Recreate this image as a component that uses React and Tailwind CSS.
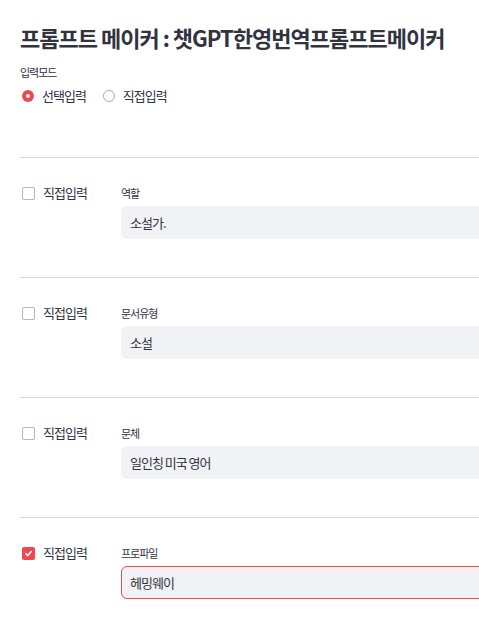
import { useState } from "react";

const FONT = { fontFamily: '"Noto Sans CJK KR", "Noto Sans", sans-serif' };

const fields = [
  { label: "역할", value: "소설가.", checked: false },
  { label: "문서유형", value: "소설", checked: false },
  { label: "문체", value: "일인칭 미국 영어", checked: false },
  { label: "프로파일", value: "헤밍웨이", checked: true },
];

function Radio({ on, label }) {
  return (
    <label className="flex items-center gap-[8px]">
      {on ? (
        <span className="flex h-[12px] w-[12px] items-center justify-center rounded-full bg-[#f0474f]">
          <span className="h-[4px] w-[4px] rounded-full bg-white" />
        </span>
      ) : (
        <span className="h-[12px] w-[12px] rounded-full border border-[#a6a9b2] bg-white" />
      )}
      <span className="text-[13px] leading-[20px] tracking-[-1px]">{label}</span>
    </label>
  );
}

function Check({ on }) {
  if (on) {
    return (
      <span className="flex h-[13px] w-[13px] items-center justify-center rounded-[2px] bg-[#f0474f]">
        <svg width="9" height="9" viewBox="0 0 10 10" fill="none">
          <path d="M2 5.2 4.2 7.3 8 2.8" stroke="white" strokeWidth="1.8" strokeLinecap="round" strokeLinejoin="round" />
        </svg>
      </span>
    );
  }
  return <span className="h-[13px] w-[13px] rounded-[2px] border border-[#b4b7bf] bg-white" />;
}

export default function App() {
  const [mode] = useState("select");

  return (
    <div className="w-[479px] overflow-hidden bg-white text-[#31333f]" style={FONT}>
      <div className="w-[640px] pl-5 pt-[21px] pb-[30px]">
        <h1 className="text-[22px] font-bold leading-[32px] tracking-[-1px]">
          프롬프트 메이커 : 챗GPT한영번역프롬프트메이커
        </h1>

        <p className="mt-[11px] text-[11px] leading-[16px] tracking-[-1px]">입력모드</p>
        <div className="mt-[6px] flex items-center gap-[17px] pl-[2px]">
          <Radio on={mode === "select"} label="선택입력" />
          <Radio on={mode === "direct"} label="직접입력" />
        </div>

        <div className="mt-[51px]">
          {fields.map((f) => (
            <section key={f.label} className="border-t border-[#d6d6d9] pt-[27px] pb-[38px]">
              <div className="flex">
                <div className="mt-[-1px] flex h-[18px] w-[101px] items-center gap-[8px] pl-[2px]">
                  <Check on={f.checked} />
                  <span className="text-[13px] leading-[18px] tracking-[-1px]">직접입력</span>
                </div>
                <div className="flex-1">
                  <p className="text-[11px] leading-[16px] tracking-[-1px]">{f.label}</p>
                  <div
                    className={
                      f.checked
                        ? "mt-[5px] flex h-[33px] items-center rounded-[6px] border border-[#f0474f] bg-[#f0f2f6] pl-[8px]"
                        : "mt-[5px] flex h-[33px] items-center rounded-[6px] border border-transparent bg-[#f0f2f6] pl-[8px]"
                    }
                  >
                    <span className="text-[13px] tracking-[-1px]">{f.value}</span>
                  </div>
                </div>
              </div>
            </section>
          ))}
        </div>
      </div>
    </div>
  );
}
